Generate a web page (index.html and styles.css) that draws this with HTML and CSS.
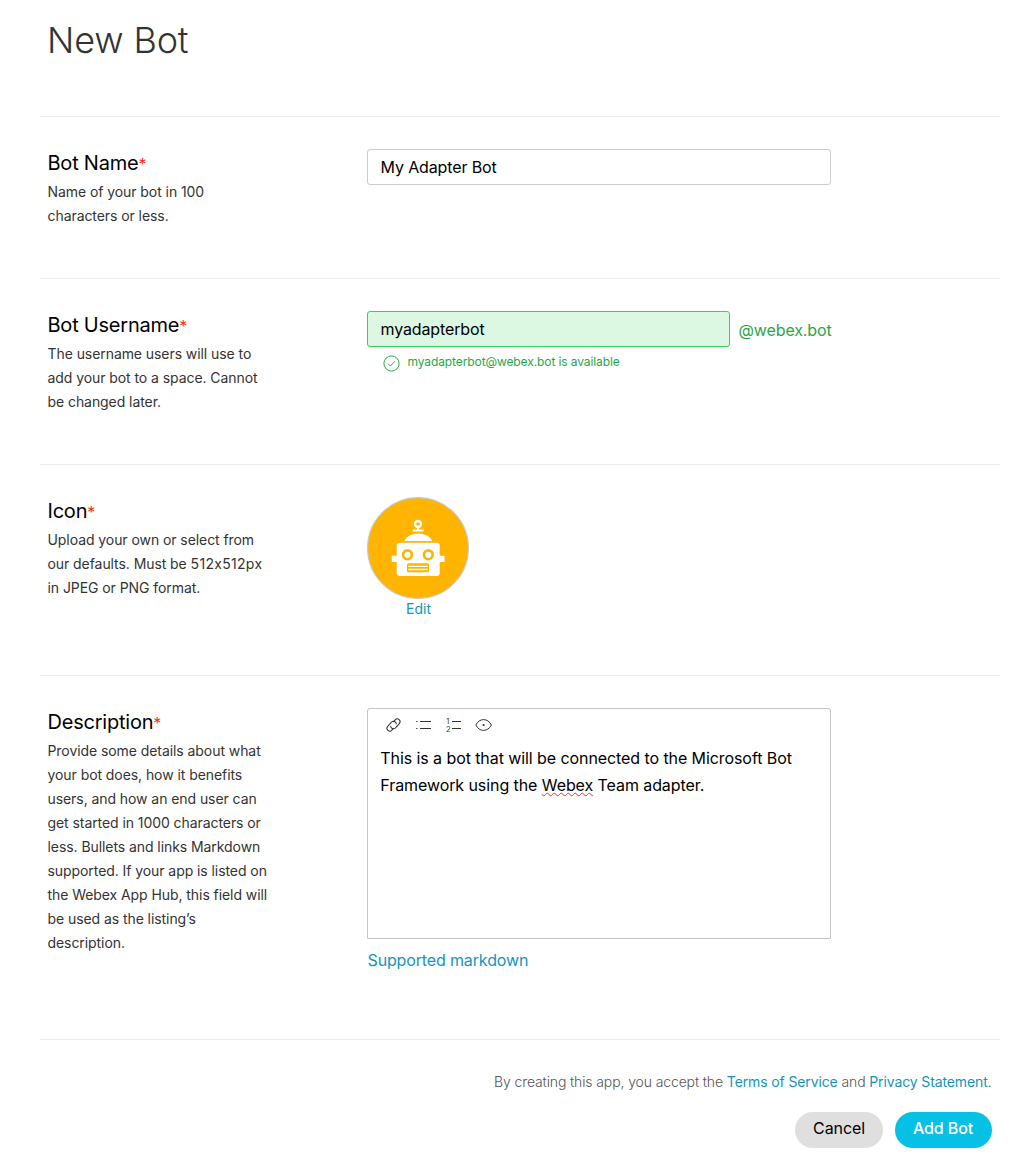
FILE: index.html
```html
<!DOCTYPE html>
<html lang="en">
<head>
<meta charset="utf-8">
<title>New Bot</title>
<link rel="stylesheet" href="styles.css">
</head>
<body>
<main class="page">
  <h1 class="title">New Bot</h1>
  <section class="row row-name">
    <div class="label">
      <h2>Bot Name<i>*</i></h2>
      <p>Name of your bot in 100<br>characters or less.</p>
    </div>
    <div class="field"><div class="input">My Adapter Bot</div></div>
  </section>
  <section class="row row-username">
    <div class="label">
      <h2>Bot Username<i>*</i></h2>
      <p>The username users will use to<br>add your bot to a space. Cannot<br>be changed later.</p>
    </div>
    <div class="field">
      <div class="user-line"><div class="input valid">myadapterbot</div><span class="suffix">@webex.bot</span></div>
      <div class="available">
        <svg width="17" height="17" viewBox="0 0 17 17" fill="none" stroke="currentColor"><circle cx="8.5" cy="8.5" r="7.6"/><path d="M5 8.7l2.3 2.3 4.6-4.7"/></svg>
        <span>myadapterbot@webex.bot is available</span>
      </div>
    </div>
  </section>
  <section class="row row-icon">
    <div class="label">
      <h2>Icon<i>*</i></h2>
      <p>Upload your own or select from<br>our defaults. Must be <span class="size">512x512px</span><br>in JPEG or PNG format.</p>
    </div>
    <div class="field">
      <div class="avatar">
        <svg width="102" height="102" viewBox="0 0 102 102">
          <circle cx="51" cy="51" r="50.4" fill="#ffb400" stroke="#c8c8c8" stroke-width="1.2"/>
          <circle cx="51" cy="27" r="3" fill="none" stroke="#fff" stroke-width="2.4"/>
          <path d="M51 30v3" stroke="#fff" stroke-width="2"/>
          <rect x="45.5" y="32.4" width="11.2" height="2.2" rx="1" fill="#fff"/>
          <path d="M37.3 44C39.5 39.3 45 36.5 51.2 36.5S63 39.3 65.2 44z" fill="#fff"/>
          <rect x="29.7" y="45.8" width="43" height="33.2" rx="3" fill="#fff"/>
          <rect x="24.8" y="58.7" width="52.7" height="6.3" rx=".6" fill="#fff"/>
          <g fill="#fff" stroke="#ffb400" stroke-width="2.6"><circle cx="40.5" cy="57.8" r="4.4"/><circle cx="61.3" cy="57.8" r="4.4"/></g>
          <rect x="40" y="66.3" width="22" height="9" rx="1.6" fill="#ffb400"/>
          <path d="M41.4 69.4h19.2M41.4 72.5h19.2" stroke="#fff" stroke-width="1.4"/>
        </svg>
        <a>Edit</a>
      </div>
    </div>
  </section>
  <section class="row row-desc">
    <div class="label">
      <h2>Description<i>*</i></h2>
      <p>Provide some details about what<br>your bot does, how it benefits<br>users, and how an end user can<br>get started in 1000 characters or<br>less. Bullets and links Markdown<br>supported. If your app is listed on<br>the Webex App Hub, this field will<br>be used as the listing’s<br>description.</p>
    </div>
    <div class="field">
      <div class="editor">
        <div class="tools">
          <svg width="18" height="18" viewBox="0 0 18 18"><g transform="rotate(-48 8.5 9)"><path d="M6.2 11.2H3.6a2.8 2.8 0 0 1 0-5.6h5.6a2.8 2.8 0 0 1 1.8 5"/><path d="M10.8 6.8h2.6a2.8 2.8 0 0 1 0 5.6H7.8a2.8 2.8 0 0 1-1.8-5"/></g></svg>
          <svg width="18" height="18" viewBox="0 0 18 18"><path d="M5 5.5h11M5 12.5h11"/><path d="M1.2 5.5h1.3M1.2 12.5h1.3"/></svg>
          <svg width="18" height="18" viewBox="0 0 18 18"><path d="M7 5.5h9M7 12.5h9"/><text x="1.2" y="8">1</text><text x="1" y="15.6">2</text></svg>
          <svg width="18" height="18" viewBox="0 0 18 18"><path d="M.8 9C2.7 5.5 5.4 3.6 8.6 3.6S14.5 5.5 16.4 9C14.5 12.5 11.8 14.4 8.6 14.4S2.7 12.5.8 9z"/><circle class="dot" cx="8.6" cy="9" r="1.1"/></svg>
        </div>
        <div class="text">This is a bot that will be connected to the Microsoft Bot<br>Framework using the <span class="spell">Webex</span> Team adapter.</div>
      </div>
      <a class="markdown">Supported markdown</a>
    </div>
  </section>
  <footer class="footer">
    <p>By creating this app, you accept the <a>Terms of Service</a> and <a>Privacy Statement</a>.</p>
    <div class="buttons"><button class="cancel">Cancel</button><button class="add">Add Bot</button></div>
  </footer>
</main>
</body>
</html>
```
FILE: styles.css
```css
* { box-sizing: border-box; }
body { margin: 0; background: #fff; color: #000; font-family: Inter, "Liberation Sans", sans-serif; font-feature-settings: "calt" 0; }
.page { width: 960px; height: 1172px; margin-left: 40px; overflow: hidden; white-space: nowrap; }
h1, h2, p { margin: 0; font-weight: 400; }
a { color: #1495bc; }
.title { height: 116px; padding: 16px 7px 0; font-size: 36px; line-height: 48px; font-weight: 300; letter-spacing: -.15px; color: #333; }
.row { display: flex; border-top: 1px solid #ebebeb; padding: 32px 0 0 7.5px; }
.row-name { height: 162px; }
.row-username { height: 186px; }
.row-icon { height: 211px; }
.row-desc { height: 364px; }
.label { width: 319.5px; }
.label h2 { height: 29px; font-size: 20px; line-height: 28px; letter-spacing: -.22px; }
.label i { color: #ff2a1a; font-size: 16px; line-height: 1; font-style: normal; }
.label p { font-size: 14px; line-height: 24px; letter-spacing: -.07px; color: #333; margin-top: 2px; }
.label .size { letter-spacing: .3px; }
.field { width: 466px; }
.input { width: 464px; height: 36px; border: 1px solid #ccc; border-radius: 3px; padding: 0 12.5px; font-size: 16px; line-height: 35px; letter-spacing: -.12px; }
.user-line { display: flex; }
.valid { width: 363px; background: #dcf8e2; border-color: #30d557; }
.suffix { margin-left: 8.5px; font-size: 16px; line-height: 38px; letter-spacing: -.12px; color: #2aa64a; }
.available { display: flex; gap: 7.5px; padding-left: 16px; margin-top: 7px; height: 17px; font-size: 12px; letter-spacing: -.1px; color: #2aa64a; }
.available svg { margin-top: -1px; }
.available span { line-height: 15px; margin-top: -2px; }
.avatar { display: flex; flex-direction: column; width: 103px; align-items: flex-start; font-size: 14px; line-height: 20px; }
.avatar a { align-self: center; }
.editor { width: 464px; height: 231px; border: 1px solid #c4c4c4; border-radius: 3px 3px 1px 1px; }
.tools { display: flex; gap: 12px; height: 36px; padding: 7px 0 0 16.5px; }
.tools svg { fill: none; stroke: #333; stroke-width: 1; }
.tools text { font-size: 7.5px; fill: #333; stroke: none; }
.tools .dot { fill: #333; stroke: none; }
.text { padding-left: 12.3px; font-size: 16px; line-height: 27px; letter-spacing: -.08px; }
.spell { text-decoration: underline wavy #e33 1px; text-underline-offset: 1px; text-decoration-skip-ink: none; }
.markdown { display: block; margin-top: 9px; padding-left: .5px; font-size: 16px; line-height: 24px; letter-spacing: -.14px; }
.footer { border-top: 1px solid #ebebeb; padding: 32px 8.5px 0 0; }
.footer p { text-align: right; font-size: 14px; line-height: 20px; letter-spacing: -.12px; font-weight: 300; color: #555; }
.footer p a { font-weight: 400; letter-spacing: -.12px; }
.buttons { display: flex; justify-content: flex-end; gap: 12px; margin: 20px -.5px 0 0; }
button { height: 36px; border: 0; border-radius: 18px; padding: 0 0 4px; font-family: inherit; font-size: 16px; letter-spacing: -.1px; }
.cancel { width: 88px; background: #dfdfdf; color: #000; }
.add { width: 97px; padding-right: 1px; background: #07c1e4; color: #fff; font-weight: 500; }
```
